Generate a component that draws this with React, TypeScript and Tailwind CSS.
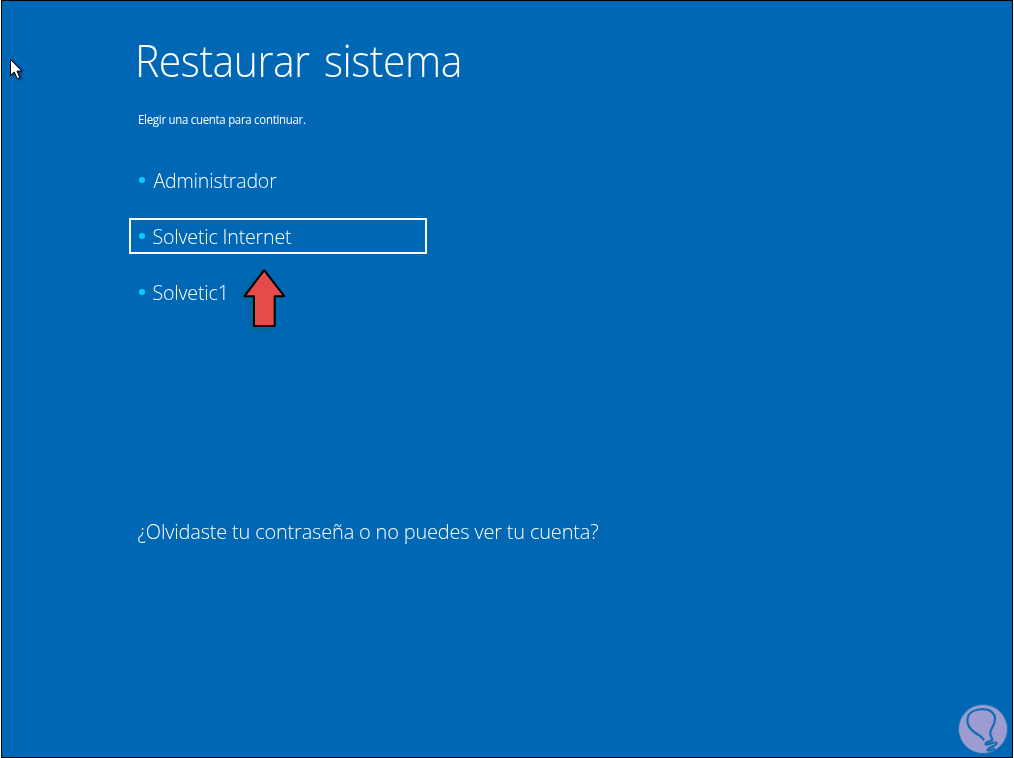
import clsx from "clsx";

interface Account {
  name: string;
  labelClass: string;
  selected?: boolean;
}

const accounts: Account[] = [
  { name: "Administrador", labelClass: "pl-[9px]" },
  { name: "Solvetic Internet", labelClass: "pl-2", selected: true },
  { name: "Solvetic1", labelClass: "pl-2" },
];

function Cursor() {
  return (
    <svg
      className="absolute left-[8px] top-[58px] drop-shadow-[2px_1px_1px_rgba(0,20,60,0.6)]"
      width="16"
      height="24"
      viewBox="0 0 16 24"
    >
      <path
        d="M2.5 1.5V17.5L6.3 14L9.2 20.7L11.8 19.6L9 13H13.8Z"
        fill="#fff"
        stroke="#000"
        strokeWidth="1"
      />
    </svg>
  );
}

function Arrow() {
  return (
    <svg
      className="absolute left-[238px] top-[264px]"
      width="52"
      height="70"
      viewBox="0 0 52 70"
    >
      <path
        d="M23 9L4 33H13V65H33V33H43Z"
        fill="#00659c"
        stroke="#00659c"
        strokeWidth="5"
        strokeLinejoin="round"
      />
      <path
        d="M26.200 6.200L6.500 32.200H16V62H36.700V32.200H46.200Z"
        fill="#e54b4b"
        stroke="#000"
        strokeWidth="2"
        strokeLinejoin="round"
      />
    </svg>
  );
}

function Watermark() {
  return (
    <svg
      className="absolute left-[956px] top-[702px]"
      width="54"
      height="54"
      viewBox="0 0 54 54"
    >
      <circle cx="27" cy="27" r="24.5" fill="#9e9bd0" stroke="#1676b5" />
      <path
        d="M27.500 37.500C25.500 33.500 22 33 18 30C13.500 26.500 11 22 11.500 17.500C12 11 18 7.500 26 7.200C34 7 39 11 39 17C39 23 35 26 34.200 30.500C33.800 33 35.500 35 36.500 37.500C35 39.500 29.500 39.500 29.500 42C30 44.500 39.500 38.500 40.800 41.300C41.300 43.800 31 45.500 31.500 48.200C33 49.500 36 47.500 38.500 46.800"
        fill="none"
        stroke="#0d6eb4"
        strokeWidth="2.2"
        strokeLinecap="round"
        strokeLinejoin="round"
      />
    </svg>
  );
}

export default function App() {
  return (
    <div className="h-[758px] w-[1014px] overflow-hidden bg-white px-px">
      <main className="flex h-full flex-col justify-between border border-black bg-[#0067b5] pb-[210px] pl-[127px] pt-[30px] font-['Open_Sans','Noto_Sans',sans-serif] text-white">
        <div className="flex flex-col gap-8">
          <header className="flex flex-col gap-[19px] whitespace-nowrap pl-2">
            <h1 className="-ml-0.5 origin-left scale-x-[0.94] text-[43.5px] font-light leading-[60px] tracking-[-0.5px] [word-spacing:4.5px]">
              Restaurar sistema
            </h1>
            <p className="ml-px origin-left scale-x-[0.955] text-[12px] leading-5 tracking-[-0.3px]">
              Elegir una cuenta para continuar.
            </p>
          </header>
          <ul className="flex w-[298px] flex-col gap-5">
            {accounts.map((account) => (
              <li key={account.name}>
                <button
                  type="button"
                  className={clsx(
                    "flex h-9 w-full items-center border-2 pl-2 text-left text-[21px] font-light",
                    account.selected ? "border-white" : "border-transparent",
                  )}
                >
                  <span className="size-[6px] rounded-full bg-[#00d0ff]" />
                  <span
                    className={clsx(
                      "origin-left scale-x-[0.933] whitespace-nowrap pt-px tracking-[-0.2px]",
                      account.labelClass,
                    )}
                  >
                    {account.name}
                  </span>
                </button>
              </li>
            ))}
          </ul>
        </div>
        <p className="origin-left scale-x-[0.952] whitespace-nowrap pl-[9px] text-[21px] font-light leading-8 tracking-[-0.2px]">
          ¿Olvidaste tu contraseña o no puedes ver tu cuenta?
        </p>
      </main>
      <Cursor />
      <Arrow />
      <Watermark />
    </div>
  );
}
